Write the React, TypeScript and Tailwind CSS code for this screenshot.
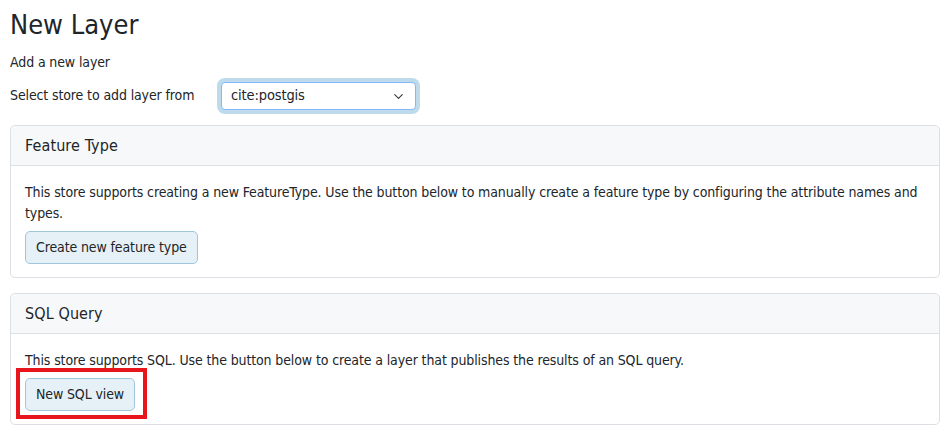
import { ChevronDown } from "lucide-react";

const font = { fontFamily: '"DejaVu Sans Condensed", "DejaVu Sans", sans-serif' };

function Panel({
  title,
  text,
  children,
}: {
  title: string;
  text: string;
  children: React.ReactNode;
}) {
  return (
    <div className="rounded-[5px] border border-[#dcdfe3] bg-white">
      <div className="flex h-[40px] items-center rounded-t-[5px] border-b border-[#dcdfe3] bg-[#f7f8f9] px-[14px] text-[16px] tracking-[0.1px] text-[#212529]">
        {title}
      </div>
      <div className="px-[14px] pt-[16px] pb-[13px]">
        <p className="mb-[7px] text-[14px] leading-[21px] text-[#212529]">{text}</p>
        {children}
      </div>
    </div>
  );
}

function LightButton({ label }: { label: string }) {
  return (
    <button className="h-[33px] rounded-[5px] border border-[#9fc7db] bg-[#e6f1f7] px-[10px] text-[14px] text-[#212529]">
      {label}
    </button>
  );
}

export default function App() {
  return (
    <div className="min-h-screen bg-white pr-[12px] pl-[10px] tracking-[-0.12px] text-[#212529]" style={font}>
      <h1 className="pt-[8px] text-[27px] leading-[34px] font-normal tracking-normal">New Layer</h1>
      <p className="mt-[10px] text-[14px] leading-[20px]">Add a new layer</p>

      <div className="mt-[10px] flex items-start">
        <label className="w-[211px] pt-[3px] text-[14px] leading-[20px]">Select store to add layer from</label>
        <div className="flex h-[28px] w-[195px] items-center justify-between rounded-[4px] border border-[#86b7fe] bg-white pr-[9px] pl-[9px] text-[14.5px] shadow-[0_0_0_4px_#bddbea]">
          <span>cite:postgis</span>
          <ChevronDown size={15} strokeWidth={1.8} className="text-[#343a40]" />
        </div>
      </div>

      <div className="mt-[15px] flex flex-col gap-[15px]">
        <Panel
          title="Feature Type"
          text="This store supports creating a new FeatureType. Use the button below to manually create a feature type by configuring the attribute names and types."
        >
          <LightButton label="Create new feature type" />
        </Panel>

        <Panel
          title="SQL Query"
          text="This store supports SQL. Use the button below to create a layer that publishes the results of an SQL query."
        >
          <div className="relative inline-block">
            <LightButton label="New SQL view" />
            <span className="pointer-events-none absolute -top-[10px] -right-[12px] -bottom-[8px] -left-[9px] border-[4px] border-[#e8151c]" />
          </div>
        </Panel>
      </div>
    </div>
  );
}
